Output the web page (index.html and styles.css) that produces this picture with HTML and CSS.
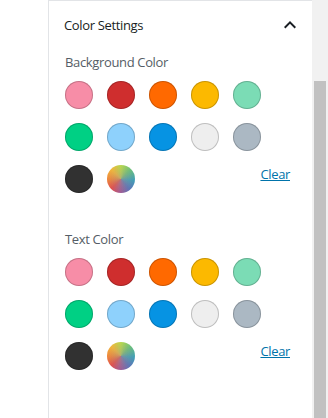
FILE: index.html
```html
<!DOCTYPE html>
<html>
<head>
<meta charset="utf-8">
<link rel="stylesheet" href="styles.css">
</head>
<body>
<div class="layout">
  <div class="gutter"></div>
  <div class="panel">
    <div class="panel-header">
      <span class="panel-title">Color Settings</span>
      <svg class="chevron" width="24" height="24" viewBox="0 0 24 24"><path d="M12 8l-6 6 1.41 1.41L12 10.83l4.59 4.59L18 14z" fill="#191e23"/></svg>
    </div>
    <div class="panel-body">
      <div class="section">
        <div class="label">Background Color</div>
        <div class="palette">
          <span class="swatch c-pink"></span>
          <span class="swatch c-red"></span>
          <span class="swatch c-orange"></span>
          <span class="swatch c-amber"></span>
          <span class="swatch c-mint"></span>
          <span class="swatch c-green"></span>
          <span class="swatch c-sky"></span>
          <span class="swatch c-blue"></span>
          <span class="swatch c-light"></span>
          <span class="swatch c-gray"></span>
          <span class="swatch c-dark"></span>
          <span class="swatch c-custom"></span>
          <a class="clear" href="#">Clear</a>
        </div>
      </div>
      <div class="section">
        <div class="label">Text Color</div>
        <div class="palette">
          <span class="swatch c-pink"></span>
          <span class="swatch c-red"></span>
          <span class="swatch c-orange"></span>
          <span class="swatch c-amber"></span>
          <span class="swatch c-mint"></span>
          <span class="swatch c-green"></span>
          <span class="swatch c-sky"></span>
          <span class="swatch c-blue"></span>
          <span class="swatch c-light"></span>
          <span class="swatch c-gray"></span>
          <span class="swatch c-dark"></span>
          <span class="swatch c-custom"></span>
          <a class="clear" href="#">Clear</a>
        </div>
      </div>
    </div>
  </div>
  <div class="scrollbar"><div class="thumb"></div></div>
</div>
</body>
</html>
```

FILE: styles.css
```css
html, body {
  margin: 0;
  padding: 0;
  background: #fff;
}
body {
  font-family: "Open Sans", "Noto Sans", sans-serif;
  font-size: 13px;
  letter-spacing: -0.35px;
}
.layout {
  display: flex;
  height: 418px;
}
.gutter {
  width: 48px;
  flex: none;
}
.panel {
  flex: 1;
  border-top: 1px solid #e2e4e7;
  border-left: 1px solid #e2e4e7;
}
.panel-header {
  height: 48px;
  display: flex;
  align-items: center;
  justify-content: space-between;
  padding: 0 10px 0 15px;
}
.panel-title {
  font-weight: 500;
  color: #191e23;
  line-height: 20px;
}
.chevron {
  display: block;
}
.panel-body {
  padding: 0 16px 0 16px;
}
.section {
  margin-top: 3px;
}
.section + .section {
  margin-top: 36px;
}
.label {
  color: #555d66;
  line-height: 20px;
  margin-bottom: 9px;
}
.palette {
  display: flex;
  flex-wrap: wrap;
  gap: 14px;
}
.swatch {
  width: 28px;
  height: 28px;
  border-radius: 50%;
  box-shadow: inset 0 0 0 1px rgba(0, 0, 0, 0.2);
  display: block;
}
.clear {
  margin-left: auto;
  margin-right: 6px;
  margin-top: -1px;
  align-self: flex-start;
  color: #0073aa;
  text-decoration: underline;
  line-height: 20px;
}
.c-pink { background: #f78da7; }
.c-red { background: #cf2e2e; }
.c-orange { background: #ff6900; }
.c-amber { background: #fcb900; }
.c-mint { background: #7bdcb5; }
.c-green { background: #00d084; }
.c-sky { background: #8ed1fc; }
.c-blue { background: #0693e3; }
.c-light { background: #eeeeee; }
.c-gray { background: #abb8c3; }
.c-dark { background: #313131; }
.c-custom {
  background:
    radial-gradient(circle at 50% 50%, rgba(160, 150, 140, 0.55) 0%, rgba(160, 150, 140, 0.25) 35%, rgba(160, 150, 140, 0) 70%),
    conic-gradient(from 0deg, #b8d84e, #6cc07a 45deg, #3f9fb8 95deg, #5c74b8 140deg, #a45a92 185deg, #e0504e 225deg, #f0883a 270deg, #f2b63a 315deg, #b8d84e);
  box-shadow: none;
}
.scrollbar {
  width: 16px;
  flex: none;
  background: #f1f1f1;
  display: flex;
  flex-direction: column;
}
.thumb {
  margin: 81px 2px 0 2px;
  flex: 1;
  background: #c1c1c1;
}
```
